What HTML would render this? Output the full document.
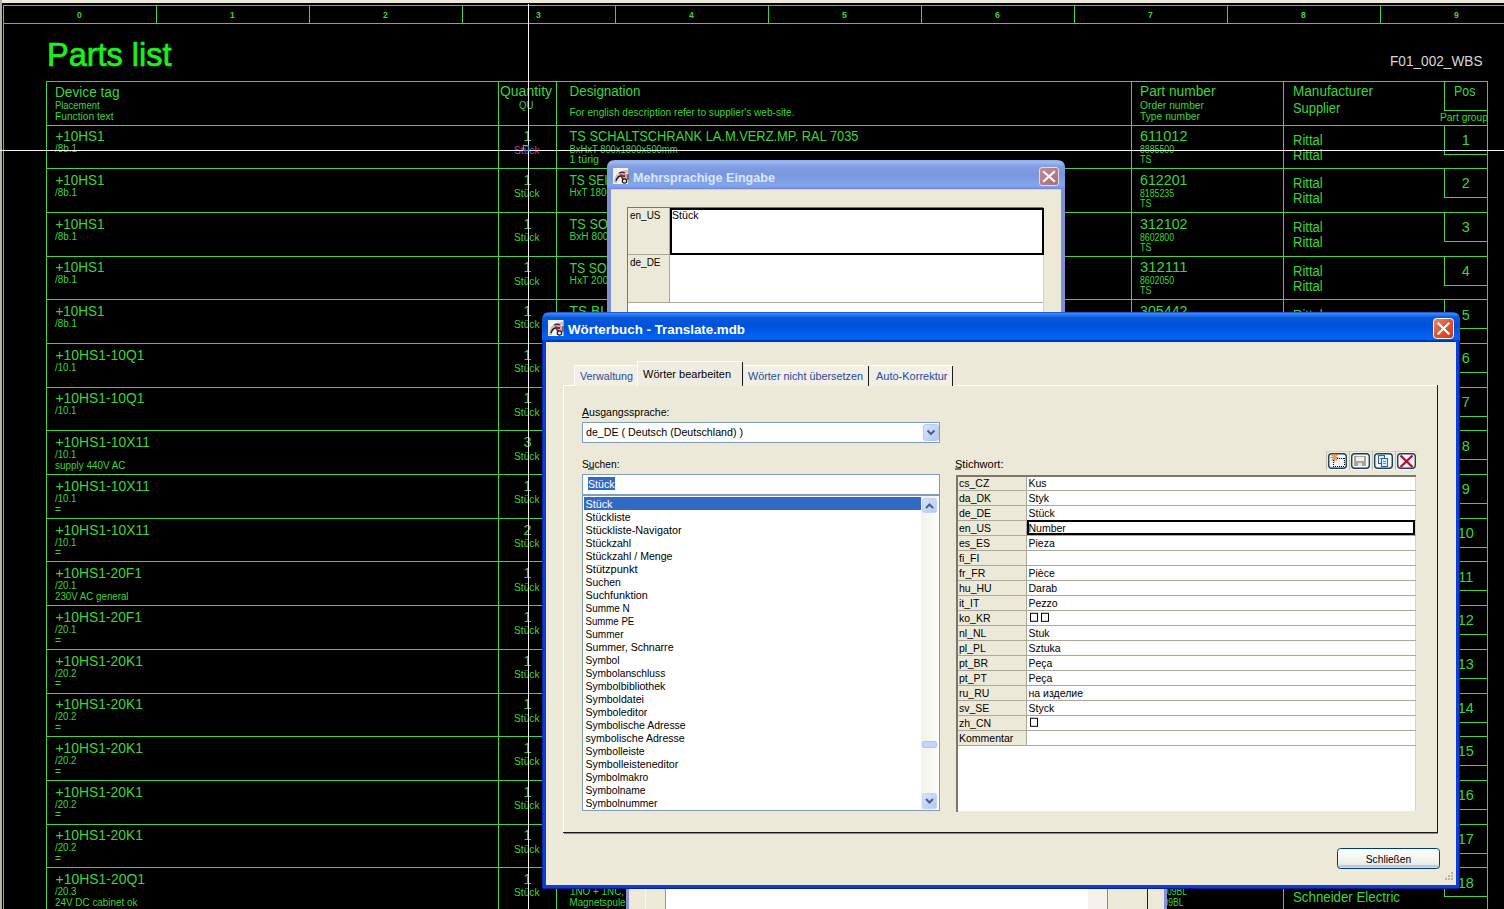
<!DOCTYPE html><html><head><meta charset="utf-8"><style>html,body{margin:0;padding:0;background:#000;overflow:hidden}svg{display:block}text{font-family:"Liberation Sans",sans-serif}</style></head><body>
<svg width="1504" height="909" viewBox="0 0 1504 909">
<defs><linearGradient id="tbA" gradientUnits="userSpaceOnUse" x1="0" y1="312" x2="0" y2="342"><stop offset="0" stop-color="#0b3ab0"/><stop offset="0.04" stop-color="#3d8bff"/><stop offset="0.1" stop-color="#2a78f4"/><stop offset="0.18" stop-color="#0a5ad8"/><stop offset="0.45" stop-color="#0050dc"/><stop offset="0.7" stop-color="#005ce8"/><stop offset="0.85" stop-color="#0064f4"/><stop offset="0.93" stop-color="#0058e8"/><stop offset="0.96" stop-color="#0030a0"/><stop offset="1" stop-color="#0030a0"/></linearGradient><linearGradient id="tbI" gradientUnits="userSpaceOnUse" x1="0" y1="160" x2="0" y2="190"><stop offset="0" stop-color="#8eaaea"/><stop offset="0.07" stop-color="#9cbaf2"/><stop offset="0.2" stop-color="#829fe4"/><stop offset="0.5" stop-color="#7896de"/><stop offset="0.8" stop-color="#80a6ec"/><stop offset="0.9" stop-color="#7e9ee6"/><stop offset="0.95" stop-color="#7b88d8"/><stop offset="1" stop-color="#7a84d4"/></linearGradient><linearGradient id="btn" x1="0" y1="0" x2="0" y2="1"><stop offset="0" stop-color="#ffffff"/><stop offset="0.7" stop-color="#f0f0ea"/><stop offset="1" stop-color="#d8d6cc"/></linearGradient><linearGradient id="scb" x1="0" y1="0" x2="1" y2="1"><stop offset="0" stop-color="#d8e4fc"/><stop offset="1" stop-color="#b4c8f6"/></linearGradient><linearGradient id="trk" x1="0" y1="0" x2="1" y2="0"><stop offset="0" stop-color="#f2f1ea"/><stop offset="1" stop-color="#fdfdfa"/></linearGradient><linearGradient id="clsA" x1="0" y1="0" x2="1" y2="1"><stop offset="0" stop-color="#f08a6c"/><stop offset="0.5" stop-color="#e0532e"/><stop offset="1" stop-color="#c83c1c"/></linearGradient><linearGradient id="clsI" x1="0" y1="0" x2="1" y2="1"><stop offset="0" stop-color="#c48c98"/><stop offset="1" stop-color="#a86c7c"/></linearGradient></defs>
<g class="cad">
<rect x="0" y="0" width="1504" height="909" fill="#000" />
<rect x="0" y="0" width="1504" height="3" fill="#ece9d8" />
<rect x="0" y="0" width="2" height="909" fill="#b4b2a6" />
<g shape-rendering="crispEdges">
<rect x="3" y="5" width="1501" height="1" fill="#48d048" />
<rect x="3" y="23" width="1501" height="1" fill="#48d048" />
<rect x="3" y="5" width="1" height="904" fill="#48d048" />
<rect x="156" y="5" width="1" height="18" fill="#48d048" />
<rect x="309" y="5" width="1" height="18" fill="#48d048" />
<rect x="462" y="5" width="1" height="18" fill="#48d048" />
<rect x="615" y="5" width="1" height="18" fill="#48d048" />
<rect x="768" y="5" width="1" height="18" fill="#48d048" />
<rect x="921" y="5" width="1" height="18" fill="#48d048" />
<rect x="1074" y="5" width="1" height="18" fill="#48d048" />
<rect x="1227" y="5" width="1" height="18" fill="#48d048" />
<rect x="1380" y="5" width="1" height="18" fill="#48d048" />
</g>
<text x="79.5" y="17.5" font-size="8.6" fill="#3cd63c" font-weight="bold" text-anchor="middle" >0</text>
<text x="232.5" y="17.5" font-size="8.6" fill="#3cd63c" font-weight="bold" text-anchor="middle" >1</text>
<text x="385.5" y="17.5" font-size="8.6" fill="#3cd63c" font-weight="bold" text-anchor="middle" >2</text>
<text x="538.5" y="17.5" font-size="8.6" fill="#3cd63c" font-weight="bold" text-anchor="middle" >3</text>
<text x="691.5" y="17.5" font-size="8.6" fill="#3cd63c" font-weight="bold" text-anchor="middle" >4</text>
<text x="844.5" y="17.5" font-size="8.6" fill="#3cd63c" font-weight="bold" text-anchor="middle" >5</text>
<text x="997.5" y="17.5" font-size="8.6" fill="#3cd63c" font-weight="bold" text-anchor="middle" >6</text>
<text x="1150.5" y="17.5" font-size="8.6" fill="#3cd63c" font-weight="bold" text-anchor="middle" >7</text>
<text x="1303.5" y="17.5" font-size="8.6" fill="#3cd63c" font-weight="bold" text-anchor="middle" >8</text>
<text x="1456.5" y="17.5" font-size="8.6" fill="#3cd63c" font-weight="bold" text-anchor="middle" >9</text>
<text x="47" y="65.5" font-size="34.06" fill="#1ef01e" textLength="124.5" lengthAdjust="spacingAndGlyphs" stroke="#1ef01e" stroke-width="0.7">Parts list</text>
<text x="1390" y="65.8" font-size="14.49" fill="#d8d8d8" textLength="92.5" lengthAdjust="spacingAndGlyphs" >F01_002_WBS</text>
<g shape-rendering="crispEdges">
<rect x="46" y="81" width="1442" height="1" fill="#48d048" />
<rect x="46" y="125" width="1442" height="1" fill="#48d048" />
<rect x="46" y="168" width="1442" height="1" fill="#48d048" />
<rect x="46" y="212" width="1442" height="1" fill="#48d048" />
<rect x="46" y="256" width="1442" height="1" fill="#48d048" />
<rect x="46" y="299" width="1442" height="1" fill="#48d048" />
<rect x="46" y="343" width="1442" height="1" fill="#48d048" />
<rect x="46" y="387" width="1442" height="1" fill="#48d048" />
<rect x="46" y="430" width="1442" height="1" fill="#48d048" />
<rect x="46" y="474" width="1442" height="1" fill="#48d048" />
<rect x="46" y="518" width="1442" height="1" fill="#48d048" />
<rect x="46" y="561" width="1442" height="1" fill="#48d048" />
<rect x="46" y="605" width="1442" height="1" fill="#48d048" />
<rect x="46" y="649" width="1442" height="1" fill="#48d048" />
<rect x="46" y="693" width="1442" height="1" fill="#48d048" />
<rect x="46" y="736" width="1442" height="1" fill="#48d048" />
<rect x="46" y="780" width="1442" height="1" fill="#48d048" />
<rect x="46" y="824" width="1442" height="1" fill="#48d048" />
<rect x="46" y="867" width="1442" height="1" fill="#48d048" />
<rect x="46" y="81" width="1" height="828" fill="#48d048" />
<rect x="498" y="81" width="1" height="828" fill="#48d048" />
<rect x="556" y="81" width="1" height="828" fill="#48d048" />
<rect x="1131" y="81" width="1" height="828" fill="#48d048" />
<rect x="1283" y="81" width="1" height="828" fill="#48d048" />
<rect x="1487" y="81" width="1" height="828" fill="#48d048" />
<rect x="1444" y="81" width="1" height="29" fill="#48d048" />
<rect x="1444" y="110" width="43" height="1" fill="#48d048" />
<rect x="1444" y="125" width="1" height="29" fill="#48d048" />
<rect x="1444" y="154" width="43" height="1" fill="#48d048" />
<rect x="1444" y="168" width="1" height="29" fill="#48d048" />
<rect x="1444" y="197" width="43" height="1" fill="#48d048" />
<rect x="1444" y="212" width="1" height="29" fill="#48d048" />
<rect x="1444" y="241" width="43" height="1" fill="#48d048" />
<rect x="1444" y="256" width="1" height="29" fill="#48d048" />
<rect x="1444" y="285" width="43" height="1" fill="#48d048" />
<rect x="1444" y="299" width="1" height="29" fill="#48d048" />
<rect x="1444" y="328" width="43" height="1" fill="#48d048" />
<rect x="1444" y="343" width="1" height="29" fill="#48d048" />
<rect x="1444" y="372" width="43" height="1" fill="#48d048" />
<rect x="1444" y="387" width="1" height="29" fill="#48d048" />
<rect x="1444" y="416" width="43" height="1" fill="#48d048" />
<rect x="1444" y="430" width="1" height="29" fill="#48d048" />
<rect x="1444" y="459" width="43" height="1" fill="#48d048" />
<rect x="1444" y="474" width="1" height="29" fill="#48d048" />
<rect x="1444" y="503" width="43" height="1" fill="#48d048" />
<rect x="1444" y="518" width="1" height="29" fill="#48d048" />
<rect x="1444" y="547" width="43" height="1" fill="#48d048" />
<rect x="1444" y="561" width="1" height="29" fill="#48d048" />
<rect x="1444" y="590" width="43" height="1" fill="#48d048" />
<rect x="1444" y="605" width="1" height="29" fill="#48d048" />
<rect x="1444" y="634" width="43" height="1" fill="#48d048" />
<rect x="1444" y="649" width="1" height="29" fill="#48d048" />
<rect x="1444" y="678" width="43" height="1" fill="#48d048" />
<rect x="1444" y="693" width="1" height="29" fill="#48d048" />
<rect x="1444" y="722" width="43" height="1" fill="#48d048" />
<rect x="1444" y="736" width="1" height="29" fill="#48d048" />
<rect x="1444" y="765" width="43" height="1" fill="#48d048" />
<rect x="1444" y="780" width="1" height="29" fill="#48d048" />
<rect x="1444" y="809" width="43" height="1" fill="#48d048" />
<rect x="1444" y="824" width="1" height="29" fill="#48d048" />
<rect x="1444" y="853" width="43" height="1" fill="#48d048" />
<rect x="1444" y="867" width="1" height="29" fill="#48d048" />
<rect x="1444" y="896" width="43" height="1" fill="#48d048" />
</g>
<text x="55" y="97" font-size="14.49" fill="#3cd63c" textLength="64.5" lengthAdjust="spacingAndGlyphs" >Device tag</text>
<text x="55" y="108.6" font-size="10.58" fill="#3cd63c" textLength="44.5" lengthAdjust="spacingAndGlyphs" >Placement</text>
<text x="55" y="119.7" font-size="10.58" fill="#3cd63c" textLength="58.5" lengthAdjust="spacingAndGlyphs" >Function text</text>
<text x="500" y="96" font-size="14.49" fill="#3cd63c" textLength="52" lengthAdjust="spacingAndGlyphs" >Quantity</text>
<text x="519" y="109.1" font-size="10.58" fill="#3cd63c" textLength="14.5" lengthAdjust="spacingAndGlyphs" >QU</text>
<text x="569.5" y="96" font-size="14.49" fill="#3cd63c" textLength="71" lengthAdjust="spacingAndGlyphs" >Designation</text>
<text x="569.5" y="115.8" font-size="10.58" fill="#3cd63c" textLength="225" lengthAdjust="spacingAndGlyphs" >For english description refer to supplier&#x27;s web-site.</text>
<text x="1140" y="96" font-size="14.49" fill="#3cd63c" textLength="75.5" lengthAdjust="spacingAndGlyphs" >Part number</text>
<text x="1140" y="108.8" font-size="10.58" fill="#3cd63c" textLength="64" lengthAdjust="spacingAndGlyphs" >Order number</text>
<text x="1140" y="119.8" font-size="10.58" fill="#3cd63c" textLength="60" lengthAdjust="spacingAndGlyphs" >Type number</text>
<text x="1293" y="96" font-size="14.49" fill="#3cd63c" textLength="80" lengthAdjust="spacingAndGlyphs" >Manufacturer</text>
<text x="1293" y="113" font-size="14.49" fill="#3cd63c" textLength="47.3" lengthAdjust="spacingAndGlyphs" >Supplier</text>
<text x="1454" y="95.8" font-size="14.49" fill="#3cd63c" textLength="21.4" lengthAdjust="spacingAndGlyphs" >Pos</text>
<text x="1440" y="120.7" font-size="10.58" fill="#3cd63c" textLength="48" lengthAdjust="spacingAndGlyphs" >Part group</text>
<text x="55.5" y="141.29" font-size="14.49" fill="#3cd63c" textLength="49" lengthAdjust="spacingAndGlyphs" >+10HS1</text>
<text x="55" y="152.29" font-size="10.58" fill="#3cd63c" textLength="22" lengthAdjust="spacingAndGlyphs" >/8b.1</text>
<text x="527.5" y="141.29" font-size="14.49" fill="#3cd63c" text-anchor="middle" >1</text>
<text x="514" y="153.69" font-size="10.58" fill="#c43ca0" textLength="25.5" lengthAdjust="spacingAndGlyphs" >Stück</text>
<text x="1465.7" y="144.79" font-size="14.49" fill="#3cd63c" text-anchor="middle" >1</text>
<text x="55.5" y="184.98" font-size="14.49" fill="#3cd63c" textLength="49" lengthAdjust="spacingAndGlyphs" >+10HS1</text>
<text x="55" y="195.98" font-size="10.58" fill="#3cd63c" textLength="22" lengthAdjust="spacingAndGlyphs" >/8b.1</text>
<text x="527.5" y="184.98" font-size="14.49" fill="#3cd63c" text-anchor="middle" >1</text>
<text x="514" y="197.38" font-size="10.58" fill="#3cd63c" textLength="25.5" lengthAdjust="spacingAndGlyphs" >Stück</text>
<text x="1465.7" y="188.48" font-size="14.49" fill="#3cd63c" text-anchor="middle" >2</text>
<text x="55.5" y="228.67" font-size="14.49" fill="#3cd63c" textLength="49" lengthAdjust="spacingAndGlyphs" >+10HS1</text>
<text x="55" y="239.67" font-size="10.58" fill="#3cd63c" textLength="22" lengthAdjust="spacingAndGlyphs" >/8b.1</text>
<text x="527.5" y="228.67" font-size="14.49" fill="#3cd63c" text-anchor="middle" >1</text>
<text x="514" y="241.07" font-size="10.58" fill="#3cd63c" textLength="25.5" lengthAdjust="spacingAndGlyphs" >Stück</text>
<text x="1465.7" y="232.17" font-size="14.49" fill="#3cd63c" text-anchor="middle" >3</text>
<text x="55.5" y="272.35999999999996" font-size="14.49" fill="#3cd63c" textLength="49" lengthAdjust="spacingAndGlyphs" >+10HS1</text>
<text x="55" y="283.35999999999996" font-size="10.58" fill="#3cd63c" textLength="22" lengthAdjust="spacingAndGlyphs" >/8b.1</text>
<text x="527.5" y="272.35999999999996" font-size="14.49" fill="#3cd63c" text-anchor="middle" >1</text>
<text x="514" y="284.76" font-size="10.58" fill="#3cd63c" textLength="25.5" lengthAdjust="spacingAndGlyphs" >Stück</text>
<text x="1465.7" y="275.85999999999996" font-size="14.49" fill="#3cd63c" text-anchor="middle" >4</text>
<text x="55.5" y="316.04999999999995" font-size="14.49" fill="#3cd63c" textLength="49" lengthAdjust="spacingAndGlyphs" >+10HS1</text>
<text x="55" y="327.04999999999995" font-size="10.58" fill="#3cd63c" textLength="22" lengthAdjust="spacingAndGlyphs" >/8b.1</text>
<text x="527.5" y="316.04999999999995" font-size="14.49" fill="#3cd63c" text-anchor="middle" >1</text>
<text x="514" y="328.45" font-size="10.58" fill="#3cd63c" textLength="25.5" lengthAdjust="spacingAndGlyphs" >Stück</text>
<text x="1465.7" y="319.54999999999995" font-size="14.49" fill="#3cd63c" text-anchor="middle" >5</text>
<text x="55.5" y="359.73999999999995" font-size="14.49" fill="#3cd63c" textLength="89" lengthAdjust="spacingAndGlyphs" >+10HS1-10Q1</text>
<text x="55" y="370.73999999999995" font-size="10.58" fill="#3cd63c" textLength="21.5" lengthAdjust="spacingAndGlyphs" >/10.1</text>
<text x="527.5" y="359.73999999999995" font-size="14.49" fill="#3cd63c" text-anchor="middle" >1</text>
<text x="514" y="372.14" font-size="10.58" fill="#3cd63c" textLength="25.5" lengthAdjust="spacingAndGlyphs" >Stück</text>
<text x="1465.7" y="363.23999999999995" font-size="14.49" fill="#3cd63c" text-anchor="middle" >6</text>
<text x="55.5" y="403.42999999999995" font-size="14.49" fill="#3cd63c" textLength="89" lengthAdjust="spacingAndGlyphs" >+10HS1-10Q1</text>
<text x="55" y="414.42999999999995" font-size="10.58" fill="#3cd63c" textLength="21.5" lengthAdjust="spacingAndGlyphs" >/10.1</text>
<text x="527.5" y="403.42999999999995" font-size="14.49" fill="#3cd63c" text-anchor="middle" >1</text>
<text x="514" y="415.83" font-size="10.58" fill="#3cd63c" textLength="25.5" lengthAdjust="spacingAndGlyphs" >Stück</text>
<text x="1465.7" y="406.92999999999995" font-size="14.49" fill="#3cd63c" text-anchor="middle" >7</text>
<text x="55.5" y="447.11999999999995" font-size="14.49" fill="#3cd63c" textLength="94.5" lengthAdjust="spacingAndGlyphs" >+10HS1-10X11</text>
<text x="55" y="458.11999999999995" font-size="10.58" fill="#3cd63c" textLength="21.5" lengthAdjust="spacingAndGlyphs" >/10.1</text>
<text x="55" y="468.91999999999996" font-size="10.58" fill="#3cd63c" textLength="70.5" lengthAdjust="spacingAndGlyphs" >supply 440V AC</text>
<text x="527.5" y="447.11999999999995" font-size="14.49" fill="#3cd63c" text-anchor="middle" >3</text>
<text x="514" y="459.52" font-size="10.58" fill="#3cd63c" textLength="25.5" lengthAdjust="spacingAndGlyphs" >Stück</text>
<text x="1465.7" y="450.61999999999995" font-size="14.49" fill="#3cd63c" text-anchor="middle" >8</text>
<text x="55.5" y="490.80999999999995" font-size="14.49" fill="#3cd63c" textLength="94.5" lengthAdjust="spacingAndGlyphs" >+10HS1-10X11</text>
<text x="55" y="501.80999999999995" font-size="10.58" fill="#3cd63c" textLength="21.5" lengthAdjust="spacingAndGlyphs" >/10.1</text>
<text x="55" y="512.61" font-size="10.58" fill="#3cd63c" textLength="6" lengthAdjust="spacingAndGlyphs" >=</text>
<text x="527.5" y="490.80999999999995" font-size="14.49" fill="#3cd63c" text-anchor="middle" >1</text>
<text x="514" y="503.21" font-size="10.58" fill="#3cd63c" textLength="25.5" lengthAdjust="spacingAndGlyphs" >Stück</text>
<text x="1465.7" y="494.30999999999995" font-size="14.49" fill="#3cd63c" text-anchor="middle" >9</text>
<text x="55.5" y="534.5" font-size="14.49" fill="#3cd63c" textLength="94.5" lengthAdjust="spacingAndGlyphs" >+10HS1-10X11</text>
<text x="55" y="545.5" font-size="10.58" fill="#3cd63c" textLength="21.5" lengthAdjust="spacingAndGlyphs" >/10.1</text>
<text x="55" y="556.3000000000001" font-size="10.58" fill="#3cd63c" textLength="6" lengthAdjust="spacingAndGlyphs" >=</text>
<text x="527.5" y="534.5" font-size="14.49" fill="#3cd63c" text-anchor="middle" >2</text>
<text x="514" y="546.9" font-size="10.58" fill="#3cd63c" textLength="25.5" lengthAdjust="spacingAndGlyphs" >Stück</text>
<text x="1465.7" y="538.0" font-size="14.49" fill="#3cd63c" text-anchor="middle" >10</text>
<text x="55.5" y="578.1899999999999" font-size="14.49" fill="#3cd63c" textLength="86.5" lengthAdjust="spacingAndGlyphs" >+10HS1-20F1</text>
<text x="55" y="589.1899999999999" font-size="10.58" fill="#3cd63c" textLength="21.5" lengthAdjust="spacingAndGlyphs" >/20.1</text>
<text x="55" y="599.99" font-size="10.58" fill="#3cd63c" textLength="73.5" lengthAdjust="spacingAndGlyphs" >230V AC general</text>
<text x="527.5" y="578.1899999999999" font-size="14.49" fill="#3cd63c" text-anchor="middle" >1</text>
<text x="514" y="590.5899999999999" font-size="10.58" fill="#3cd63c" textLength="25.5" lengthAdjust="spacingAndGlyphs" >Stück</text>
<text x="1465.7" y="581.6899999999999" font-size="14.49" fill="#3cd63c" text-anchor="middle" >11</text>
<text x="55.5" y="621.88" font-size="14.49" fill="#3cd63c" textLength="86.5" lengthAdjust="spacingAndGlyphs" >+10HS1-20F1</text>
<text x="55" y="632.88" font-size="10.58" fill="#3cd63c" textLength="21.5" lengthAdjust="spacingAndGlyphs" >/20.1</text>
<text x="55" y="643.6800000000001" font-size="10.58" fill="#3cd63c" textLength="6" lengthAdjust="spacingAndGlyphs" >=</text>
<text x="527.5" y="621.88" font-size="14.49" fill="#3cd63c" text-anchor="middle" >1</text>
<text x="514" y="634.28" font-size="10.58" fill="#3cd63c" textLength="25.5" lengthAdjust="spacingAndGlyphs" >Stück</text>
<text x="1465.7" y="625.38" font-size="14.49" fill="#3cd63c" text-anchor="middle" >12</text>
<text x="55.5" y="665.57" font-size="14.49" fill="#3cd63c" textLength="87.5" lengthAdjust="spacingAndGlyphs" >+10HS1-20K1</text>
<text x="55" y="676.57" font-size="10.58" fill="#3cd63c" textLength="21.5" lengthAdjust="spacingAndGlyphs" >/20.2</text>
<text x="55" y="687.3700000000001" font-size="10.58" fill="#3cd63c" textLength="6" lengthAdjust="spacingAndGlyphs" >=</text>
<text x="527.5" y="665.57" font-size="14.49" fill="#3cd63c" text-anchor="middle" >1</text>
<text x="514" y="677.97" font-size="10.58" fill="#3cd63c" textLength="25.5" lengthAdjust="spacingAndGlyphs" >Stück</text>
<text x="1465.7" y="669.07" font-size="14.49" fill="#3cd63c" text-anchor="middle" >13</text>
<text x="55.5" y="709.26" font-size="14.49" fill="#3cd63c" textLength="87.5" lengthAdjust="spacingAndGlyphs" >+10HS1-20K1</text>
<text x="55" y="720.26" font-size="10.58" fill="#3cd63c" textLength="21.5" lengthAdjust="spacingAndGlyphs" >/20.2</text>
<text x="55" y="731.0600000000001" font-size="10.58" fill="#3cd63c" textLength="6" lengthAdjust="spacingAndGlyphs" >=</text>
<text x="527.5" y="709.26" font-size="14.49" fill="#3cd63c" text-anchor="middle" >1</text>
<text x="514" y="721.66" font-size="10.58" fill="#3cd63c" textLength="25.5" lengthAdjust="spacingAndGlyphs" >Stück</text>
<text x="1465.7" y="712.76" font-size="14.49" fill="#3cd63c" text-anchor="middle" >14</text>
<text x="55.5" y="752.9499999999999" font-size="14.49" fill="#3cd63c" textLength="87.5" lengthAdjust="spacingAndGlyphs" >+10HS1-20K1</text>
<text x="55" y="763.9499999999999" font-size="10.58" fill="#3cd63c" textLength="21.5" lengthAdjust="spacingAndGlyphs" >/20.2</text>
<text x="55" y="774.75" font-size="10.58" fill="#3cd63c" textLength="6" lengthAdjust="spacingAndGlyphs" >=</text>
<text x="527.5" y="752.9499999999999" font-size="14.49" fill="#3cd63c" text-anchor="middle" >1</text>
<text x="514" y="765.3499999999999" font-size="10.58" fill="#3cd63c" textLength="25.5" lengthAdjust="spacingAndGlyphs" >Stück</text>
<text x="1465.7" y="756.4499999999999" font-size="14.49" fill="#3cd63c" text-anchor="middle" >15</text>
<text x="55.5" y="796.64" font-size="14.49" fill="#3cd63c" textLength="87.5" lengthAdjust="spacingAndGlyphs" >+10HS1-20K1</text>
<text x="55" y="807.64" font-size="10.58" fill="#3cd63c" textLength="21.5" lengthAdjust="spacingAndGlyphs" >/20.2</text>
<text x="55" y="818.44" font-size="10.58" fill="#3cd63c" textLength="6" lengthAdjust="spacingAndGlyphs" >=</text>
<text x="527.5" y="796.64" font-size="14.49" fill="#3cd63c" text-anchor="middle" >1</text>
<text x="514" y="809.04" font-size="10.58" fill="#3cd63c" textLength="25.5" lengthAdjust="spacingAndGlyphs" >Stück</text>
<text x="1465.7" y="800.14" font-size="14.49" fill="#3cd63c" text-anchor="middle" >16</text>
<text x="55.5" y="840.33" font-size="14.49" fill="#3cd63c" textLength="87.5" lengthAdjust="spacingAndGlyphs" >+10HS1-20K1</text>
<text x="55" y="851.33" font-size="10.58" fill="#3cd63c" textLength="21.5" lengthAdjust="spacingAndGlyphs" >/20.2</text>
<text x="55" y="862.1300000000001" font-size="10.58" fill="#3cd63c" textLength="6" lengthAdjust="spacingAndGlyphs" >=</text>
<text x="527.5" y="840.33" font-size="14.49" fill="#3cd63c" text-anchor="middle" >1</text>
<text x="514" y="852.73" font-size="10.58" fill="#3cd63c" textLength="25.5" lengthAdjust="spacingAndGlyphs" >Stück</text>
<text x="1465.7" y="843.83" font-size="14.49" fill="#3cd63c" text-anchor="middle" >17</text>
<text x="55.5" y="884.02" font-size="14.49" fill="#3cd63c" textLength="89.5" lengthAdjust="spacingAndGlyphs" >+10HS1-20Q1</text>
<text x="55" y="895.02" font-size="10.58" fill="#3cd63c" textLength="21.5" lengthAdjust="spacingAndGlyphs" >/20.3</text>
<text x="55" y="905.82" font-size="10.58" fill="#3cd63c" textLength="82.5" lengthAdjust="spacingAndGlyphs" >24V DC cabinet ok</text>
<text x="527.5" y="884.02" font-size="14.49" fill="#3cd63c" text-anchor="middle" >1</text>
<text x="514" y="896.42" font-size="10.58" fill="#3cd63c" textLength="25.5" lengthAdjust="spacingAndGlyphs" >Stück</text>
<text x="1465.7" y="887.52" font-size="14.49" fill="#3cd63c" text-anchor="middle" >18</text>
<text x="569.5" y="141.49" font-size="14.49" fill="#3cd63c" textLength="289" lengthAdjust="spacingAndGlyphs" >TS SCHALTSCHRANK LA.M.VERZ.MP. RAL 7035</text>
<text x="569.5" y="152.69" font-size="10.58" fill="#3cd63c" textLength="108" lengthAdjust="spacingAndGlyphs" >BxHxT 800x1800x500mm</text>
<text x="569.5" y="163.49" font-size="10.58" fill="#3cd63c" textLength="29.5" lengthAdjust="spacingAndGlyphs" >1 türig</text>
<text x="569.5" y="185.17999999999998" font-size="14.49" fill="#3cd63c" textLength="180" lengthAdjust="spacingAndGlyphs" >TS SEITENWAND STAHLBLECH</text>
<text x="569.5" y="196.38" font-size="10.58" fill="#3cd63c" textLength="80" lengthAdjust="spacingAndGlyphs" >HxT 1800x500mm</text>
<text x="569.5" y="228.86999999999998" font-size="14.49" fill="#3cd63c" textLength="170" lengthAdjust="spacingAndGlyphs" >TS SOCKEL FRONT/HINTEN</text>
<text x="569.5" y="240.07" font-size="10.58" fill="#3cd63c" textLength="78" lengthAdjust="spacingAndGlyphs" >BxH 800x100mm</text>
<text x="569.5" y="272.56" font-size="14.49" fill="#3cd63c" textLength="175" lengthAdjust="spacingAndGlyphs" >TS SOCKEL SEITENBLENDEN</text>
<text x="569.5" y="283.76" font-size="10.58" fill="#3cd63c" textLength="78" lengthAdjust="spacingAndGlyphs" >HxT 200x500mm</text>
<text x="569.5" y="316.25" font-size="14.49" fill="#3cd63c" textLength="150" lengthAdjust="spacingAndGlyphs" >TS BLINDABDECKUNG</text>
<text x="570" y="894.62" font-size="10.58" fill="#3cd63c" textLength="54" lengthAdjust="spacingAndGlyphs" >1NO + 1NC,</text>
<text x="569.5" y="905.62" font-size="10.58" fill="#3cd63c" textLength="56" lengthAdjust="spacingAndGlyphs" >Magnetspule</text>
<text x="1140" y="141.39" font-size="14.49" fill="#3cd63c" textLength="47.5" lengthAdjust="spacingAndGlyphs" >611012</text>
<text x="1140" y="153.39" font-size="10.58" fill="#3cd63c" textLength="34" lengthAdjust="spacingAndGlyphs" >8885500</text>
<text x="1140" y="163.39" font-size="10.58" fill="#3cd63c" textLength="11.5" lengthAdjust="spacingAndGlyphs" >TS</text>
<text x="1293" y="144.79" font-size="14.49" fill="#3cd63c" textLength="29.7" lengthAdjust="spacingAndGlyphs" >Rittal</text>
<text x="1293" y="159.59" font-size="14.49" fill="#3cd63c" textLength="29.7" lengthAdjust="spacingAndGlyphs" >Rittal</text>
<text x="1140" y="185.07999999999998" font-size="14.49" fill="#3cd63c" textLength="47.5" lengthAdjust="spacingAndGlyphs" >612201</text>
<text x="1140" y="197.07999999999998" font-size="10.58" fill="#3cd63c" textLength="34" lengthAdjust="spacingAndGlyphs" >8185235</text>
<text x="1140" y="207.07999999999998" font-size="10.58" fill="#3cd63c" textLength="11.5" lengthAdjust="spacingAndGlyphs" >TS</text>
<text x="1293" y="188.48" font-size="14.49" fill="#3cd63c" textLength="29.7" lengthAdjust="spacingAndGlyphs" >Rittal</text>
<text x="1293" y="203.27999999999997" font-size="14.49" fill="#3cd63c" textLength="29.7" lengthAdjust="spacingAndGlyphs" >Rittal</text>
<text x="1140" y="228.76999999999998" font-size="14.49" fill="#3cd63c" textLength="47.5" lengthAdjust="spacingAndGlyphs" >312102</text>
<text x="1140" y="240.76999999999998" font-size="10.58" fill="#3cd63c" textLength="34" lengthAdjust="spacingAndGlyphs" >8602800</text>
<text x="1140" y="250.76999999999998" font-size="10.58" fill="#3cd63c" textLength="11.5" lengthAdjust="spacingAndGlyphs" >TS</text>
<text x="1293" y="232.17" font-size="14.49" fill="#3cd63c" textLength="29.7" lengthAdjust="spacingAndGlyphs" >Rittal</text>
<text x="1293" y="246.96999999999997" font-size="14.49" fill="#3cd63c" textLength="29.7" lengthAdjust="spacingAndGlyphs" >Rittal</text>
<text x="1140" y="272.46" font-size="14.49" fill="#3cd63c" textLength="47.5" lengthAdjust="spacingAndGlyphs" >312111</text>
<text x="1140" y="284.46" font-size="10.58" fill="#3cd63c" textLength="34" lengthAdjust="spacingAndGlyphs" >8602050</text>
<text x="1140" y="294.46" font-size="10.58" fill="#3cd63c" textLength="11.5" lengthAdjust="spacingAndGlyphs" >TS</text>
<text x="1293" y="275.85999999999996" font-size="14.49" fill="#3cd63c" textLength="29.7" lengthAdjust="spacingAndGlyphs" >Rittal</text>
<text x="1293" y="290.65999999999997" font-size="14.49" fill="#3cd63c" textLength="29.7" lengthAdjust="spacingAndGlyphs" >Rittal</text>
<text x="1140" y="316.15" font-size="14.49" fill="#3cd63c" textLength="47.5" lengthAdjust="spacingAndGlyphs" >305442</text>
<text x="1140" y="328.15" font-size="10.58" fill="#3cd63c" textLength="34" lengthAdjust="spacingAndGlyphs" >8612000</text>
<text x="1140" y="338.15" font-size="10.58" fill="#3cd63c" textLength="11.5" lengthAdjust="spacingAndGlyphs" >TS</text>
<text x="1293" y="319.54999999999995" font-size="14.49" fill="#3cd63c" textLength="29.7" lengthAdjust="spacingAndGlyphs" >Rittal</text>
<text x="1293" y="334.34999999999997" font-size="14.49" fill="#3cd63c" textLength="29.7" lengthAdjust="spacingAndGlyphs" >Rittal</text>
<text x="1145" y="894.62" font-size="10.58" fill="#3cd63c" textLength="42" lengthAdjust="spacingAndGlyphs" >LC1D09BL</text>
<text x="1141.5" y="905.62" font-size="10.58" fill="#3cd63c" textLength="42" lengthAdjust="spacingAndGlyphs" >LC1D09BL</text>
<text x="1293" y="901.92" font-size="14.49" fill="#3cd63c" textLength="107" lengthAdjust="spacingAndGlyphs" >Schneider Electric</text>
<g shape-rendering="crispEdges">
<rect x="528" y="4" width="1" height="905" fill="#f4f4f4" />
<rect x="0" y="150" width="1504" height="1" fill="#f4f4f4" />
<rect x="523.5" y="145.5" width="5" height="5" fill="none" stroke="#40b8d8" stroke-width="1"/>
</g>
</g>
<path d="M607 168 Q607 160 615 160 L1057 160 Q1065 160 1065 168 L1065 330 L607 330 Z" fill="url(#tbI)"/>
<g shape-rendering="crispEdges">
<rect x="607" y="189" width="4" height="140" fill="#7f8fd8" />
<rect x="1061" y="189" width="4" height="140" fill="#7f8fd8" />
<rect x="611" y="190" width="450" height="140" fill="#ece9d8" />
<rect x="611" y="189" width="450" height="1" fill="#c8d0ee" />
</g>
<g transform="translate(613,168)">
<rect x="0" y="0" width="16" height="16" fill="#f4f2f0"/>
<path d="M1 15 C1 7 6 2 15 2 L15 5 C9 5 4 9 4 15 Z" fill="#c8c4bc"/>
<path d="M7 8 C9 5 13 5 15 7 L15 11 C12 13 9 12 8 10 Z" fill="#e89aa8"/>
<path d="M6 5 C8 4 10 4 12 5" fill="none" stroke="#3a2a3a" stroke-width="1.3"/>
<path d="M3 13 C4 10 6 8 8 8 L12 8" fill="none" stroke="#2a1a22" stroke-width="1.4"/>
<path d="M8 6 C8 9 9 11 12 12" fill="none" stroke="#8a2030" stroke-width="1.3"/>
<path d="M15 6 L15 12" stroke="#3a2a3a" stroke-width="1.2"/>
<circle cx="11.5" cy="13" r="2.2" fill="#dce8dc" stroke="#1a1a1a" stroke-width="1.2"/>
<rect x="15" y="0" width="1" height="16" fill="#5a6a8a" opacity="0.6"/>
</g>
<text x="633" y="182.2" font-size="13" fill="#dce6fa" font-weight="bold" textLength="142" lengthAdjust="spacingAndGlyphs" >Mehrsprachige Eingabe</text>
<rect x="1039.5" y="167.5" width="19" height="18" rx="2.5" fill="url(#clsI)" stroke="#e4dcec" stroke-width="1"/>
<path d="M1044 172 L1054 181 M1054 172 L1044 181" stroke="#fff" stroke-width="2.2" stroke-linecap="square"/>
<g shape-rendering="crispEdges">
<rect x="627" y="207" width="417" height="110" fill="#ffffff" />
<rect x="627" y="207" width="43" height="96" fill="#ece9d8" />
<rect x="627" y="207" width="417" height="1" fill="#7a7868" />
<rect x="627" y="207" width="1" height="110" fill="#7a7868" />
<rect x="1043" y="207" width="1" height="110" fill="#d4d0c8" />
<rect x="669" y="208" width="1" height="95" fill="#aca899" />
<rect x="628" y="254" width="415" height="1" fill="#aca899" />
<rect x="628" y="302" width="415" height="1" fill="#aca899" />
</g>
<rect x="671.0" y="209.0" width="372" height="45" fill="#fff" stroke="#000" stroke-width="2" rx="0" />
<text x="630" y="219.3" font-size="11" fill="#000" textLength="30.5" lengthAdjust="spacingAndGlyphs" >en_US</text>
<text x="672" y="219.3" font-size="11" fill="#000" textLength="26.5" lengthAdjust="spacingAndGlyphs" >Stück</text>
<text x="630" y="266.4" font-size="11" fill="#000" textLength="30.5" lengthAdjust="spacingAndGlyphs" >de_DE</text>
<g shape-rendering="crispEdges">
<rect x="626" y="880" width="541" height="29" fill="#ffffff" />
<rect x="626" y="880" width="3" height="29" fill="#8a90d8" />
<rect x="629" y="880" width="37" height="29" fill="#ece9d8" />
<rect x="645" y="880" width="1" height="29" fill="#f8f8f0" />
<rect x="665" y="880" width="1" height="29" fill="#9a9890" />
<rect x="1088" y="880" width="19" height="29" fill="#f3f2ec" />
<rect x="1107" y="880" width="1" height="29" fill="#8a8880" />
<rect x="1108" y="880" width="39" height="29" fill="#ece9d8" />
<rect x="1147" y="880" width="1" height="29" fill="#202020" />
<rect x="1148" y="880" width="16" height="29" fill="#ece9d8" />
<rect x="1164" y="880" width="3" height="29" fill="#8a90d8" />
</g>
<path d="M542 320 Q542 312 550 312 L1452 312 Q1460 312 1460 320 L1460 889 L542 889 Z" fill="url(#tbA)"/>
<g shape-rendering="crispEdges">
<rect x="542" y="341" width="4" height="548" fill="#0a3ed8" />
<rect x="1456" y="341" width="4" height="548" fill="#0a3ed8" />
<rect x="542" y="885" width="918" height="4" fill="#0a3ed8" />
<rect x="542" y="341" width="1" height="548" fill="#0028a8" />
<rect x="1459" y="341" width="1" height="548" fill="#001c90" />
<rect x="542" y="888" width="918" height="1" fill="#001c90" />
<rect x="546" y="342" width="910" height="543" fill="#ece9d8" />
<rect x="546" y="341" width="910" height="1" fill="#0030b0" />
</g>
<g transform="translate(548,320)">
<rect x="0" y="0" width="16" height="16" fill="#f4f2f0"/>
<path d="M1 15 C1 7 6 2 15 2 L15 5 C9 5 4 9 4 15 Z" fill="#c8c4bc"/>
<path d="M7 8 C9 5 13 5 15 7 L15 11 C12 13 9 12 8 10 Z" fill="#e89aa8"/>
<path d="M6 5 C8 4 10 4 12 5" fill="none" stroke="#3a2a3a" stroke-width="1.3"/>
<path d="M3 13 C4 10 6 8 8 8 L12 8" fill="none" stroke="#2a1a22" stroke-width="1.4"/>
<path d="M8 6 C8 9 9 11 12 12" fill="none" stroke="#8a2030" stroke-width="1.3"/>
<path d="M15 6 L15 12" stroke="#3a2a3a" stroke-width="1.2"/>
<circle cx="11.5" cy="13" r="2.2" fill="#dce8dc" stroke="#1a1a1a" stroke-width="1.2"/>
<rect x="15" y="0" width="1" height="16" fill="#5a6a8a" opacity="0.6"/>
</g>
<text x="568" y="333.7" font-size="13" fill="#ffffff" font-weight="bold" textLength="177" lengthAdjust="spacingAndGlyphs" >Wörterbuch - Translate.mdb</text>
<rect x="1433.5" y="318.5" width="20" height="20" rx="3" fill="url(#clsA)" stroke="#ffffff" stroke-width="1"/>
<path d="M1438.5 323.5 L1448.5 333.5 M1448.5 323.5 L1438.5 333.5" stroke="#fff" stroke-width="2.2" stroke-linecap="square"/>
<g shape-rendering="crispEdges">
<rect x="563" y="385" width="875" height="449" fill="#ece9d8" />
<rect x="563" y="385" width="875" height="1" fill="#ffffff" />
<rect x="563" y="385" width="1" height="449" fill="#ffffff" />
<rect x="1437" y="385" width="1" height="449" fill="#1a1a1a" />
<rect x="563" y="832" width="875" height="1" fill="#1a1a1a" />
<rect x="564" y="833" width="874" height="1" fill="#8a8880" />
</g>
<g shape-rendering="crispEdges">
<rect x="574" y="365" width="63" height="21" fill="#f1efe6" />
<rect x="574" y="365" width="63" height="1" fill="#ffffff" />
<rect x="574" y="365" width="1" height="21" fill="#ffffff" />
<rect x="744" y="365" width="125" height="21" fill="#f1efe6" />
<rect x="744" y="365" width="125" height="1" fill="#ffffff" />
<rect x="868" y="366" width="1" height="20" fill="#1a1a1a" />
<rect x="870" y="365" width="83" height="21" fill="#f1efe6" />
<rect x="870" y="365" width="83" height="1" fill="#ffffff" />
<rect x="952" y="366" width="1" height="20" fill="#1a1a1a" />
<rect x="637" y="361" width="106" height="25" fill="#eeece0" />
<rect x="637" y="361" width="106" height="1" fill="#ffffff" />
<rect x="637" y="361" width="1" height="25" fill="#ffffff" />
<rect x="742" y="362" width="1" height="24" fill="#1a1a1a" />
</g>
<text x="580" y="379.6" font-size="11" fill="#2a4a9a" textLength="53" lengthAdjust="spacingAndGlyphs" >Verwaltung</text>
<text x="643" y="377.6" font-size="11" fill="#000" textLength="88" lengthAdjust="spacingAndGlyphs" >Wörter bearbeiten</text>
<text x="748" y="379.6" font-size="11" fill="#2a4a9a" textLength="115" lengthAdjust="spacingAndGlyphs" >Wörter nicht übersetzen</text>
<text x="876" y="379.6" font-size="11" fill="#2a4a9a" textLength="71.5" lengthAdjust="spacingAndGlyphs" >Auto-Korrektur</text>
<text x="582" y="416.1" font-size="11" fill="#000" textLength="87.5" lengthAdjust="spacingAndGlyphs" >Ausgangssprache:</text>
<rect x="582" y="417" width="7" height="1" fill="#000"/>
<g shape-rendering="crispEdges">
<rect x="582" y="422" width="358" height="21" fill="#7f9db9" />
<rect x="583" y="423" width="356" height="19" fill="#ffffff" />
</g>
<text x="586" y="436.3" font-size="11" fill="#000" textLength="157" lengthAdjust="spacingAndGlyphs" >de_DE ( Deutsch (Deutschland) )</text>
<rect x="923.5" y="424.5" width="15" height="16" rx="2" fill="url(#scb)" stroke="#b8caf4" stroke-width="1"/>
<path d="M927.5 430.5 L931 434 L934.5 430.5" fill="none" stroke="#4d6185" stroke-width="2"/>
<text x="582" y="467.6" font-size="11" fill="#000" textLength="37.5" lengthAdjust="spacingAndGlyphs" >Suchen:</text>
<rect x="588" y="468.5" width="6" height="1" fill="#000"/>
<g shape-rendering="crispEdges">
<rect x="582" y="474" width="358" height="21" fill="#7f9db9" />
<rect x="583" y="475" width="356" height="19" fill="#ffffff" />
<rect x="588" y="477" width="27" height="13" fill="#316ac5" />
</g>
<text x="588" y="488" font-size="11" fill="#ffffff" textLength="26.5" lengthAdjust="spacingAndGlyphs" >Stück</text>
<g shape-rendering="crispEdges">
<rect x="582" y="495" width="358" height="316" fill="#7f9db9" />
<rect x="583" y="496" width="356" height="314" fill="#ffffff" />
<rect x="584" y="497" width="337" height="13" fill="#316ac5" />
<rect x="921" y="496" width="18" height="314" fill="url(#trk)" />
</g>
<text x="585.5" y="508" font-size="11" fill="#ffffff" textLength="27" lengthAdjust="spacingAndGlyphs" >Stück</text>
<text x="585.5" y="521" font-size="11" fill="#000" textLength="45" lengthAdjust="spacingAndGlyphs" >Stückliste</text>
<text x="585.5" y="534" font-size="11" fill="#000" textLength="96" lengthAdjust="spacingAndGlyphs" >Stückliste-Navigator</text>
<text x="585.5" y="547" font-size="11" fill="#000" textLength="45.5" lengthAdjust="spacingAndGlyphs" >Stückzahl</text>
<text x="585.5" y="560" font-size="11" fill="#000" textLength="87" lengthAdjust="spacingAndGlyphs" >Stückzahl / Menge</text>
<text x="585.5" y="573" font-size="11" fill="#000" textLength="52" lengthAdjust="spacingAndGlyphs" >Stützpunkt</text>
<text x="585.5" y="586" font-size="11" fill="#000" textLength="35.2" lengthAdjust="spacingAndGlyphs" >Suchen</text>
<text x="585.5" y="599" font-size="11" fill="#000" textLength="62.3" lengthAdjust="spacingAndGlyphs" >Suchfunktion</text>
<text x="585.5" y="612" font-size="11" fill="#000" textLength="44.2" lengthAdjust="spacingAndGlyphs" >Summe N</text>
<text x="585.5" y="625" font-size="11" fill="#000" textLength="48.8" lengthAdjust="spacingAndGlyphs" >Summe PE</text>
<text x="585.5" y="638" font-size="11" fill="#000" textLength="38" lengthAdjust="spacingAndGlyphs" >Summer</text>
<text x="585.5" y="651" font-size="11" fill="#000" textLength="88" lengthAdjust="spacingAndGlyphs" >Summer, Schnarre</text>
<text x="585.5" y="664" font-size="11" fill="#000" textLength="34" lengthAdjust="spacingAndGlyphs" >Symbol</text>
<text x="585.5" y="677" font-size="11" fill="#000" textLength="79.8" lengthAdjust="spacingAndGlyphs" >Symbolanschluss</text>
<text x="585.5" y="690" font-size="11" fill="#000" textLength="79.8" lengthAdjust="spacingAndGlyphs" >Symbolbibliothek</text>
<text x="585.5" y="703" font-size="11" fill="#000" textLength="58.4" lengthAdjust="spacingAndGlyphs" >Symboldatei</text>
<text x="585.5" y="716" font-size="11" fill="#000" textLength="61.8" lengthAdjust="spacingAndGlyphs" >Symboleditor</text>
<text x="585.5" y="729" font-size="11" fill="#000" textLength="100.2" lengthAdjust="spacingAndGlyphs" >Symbolische Adresse</text>
<text x="585.5" y="742" font-size="11" fill="#000" textLength="99.2" lengthAdjust="spacingAndGlyphs" >symbolische Adresse</text>
<text x="585.5" y="755" font-size="11" fill="#000" textLength="59.1" lengthAdjust="spacingAndGlyphs" >Symbolleiste</text>
<text x="585.5" y="768" font-size="11" fill="#000" textLength="92.8" lengthAdjust="spacingAndGlyphs" >Symbolleisteneditor</text>
<text x="585.5" y="781" font-size="11" fill="#000" textLength="62.8" lengthAdjust="spacingAndGlyphs" >Symbolmakro</text>
<text x="585.5" y="794" font-size="11" fill="#000" textLength="60.1" lengthAdjust="spacingAndGlyphs" >Symbolname</text>
<text x="585.5" y="807" font-size="11" fill="#000" textLength="72" lengthAdjust="spacingAndGlyphs" >Symbolnummer</text>
<rect x="922.5" y="498.5" width="14" height="14" rx="2" fill="url(#scb)" stroke="#c2d2f6" stroke-width="1"/>
<path d="M926 508 L929.5 504.5 L933 508" fill="none" stroke="#4d6185" stroke-width="2"/>
<rect x="922.5" y="793.5" width="14" height="15" rx="2" fill="url(#scb)" stroke="#c2d2f6" stroke-width="1"/>
<path d="M926 799 L929.5 802.5 L933 799" fill="none" stroke="#4d6185" stroke-width="2"/>
<rect x="922.5" y="741.5" width="14" height="6" rx="1.5" fill="#c6d4f7" stroke="#b0c2ee" stroke-width="1"/>
<text x="955" y="467.6" font-size="11" fill="#000" textLength="48.5" lengthAdjust="spacingAndGlyphs" >Stichwort:</text>
<rect x="955" y="468.5" width="6" height="1" fill="#000"/>
<g shape-rendering="crispEdges">
<rect x="1326" y="451" width="91" height="1" fill="#d6d2c6" />
<rect x="1326" y="469" width="91" height="1" fill="#f6f5f0" />
<rect x="1326" y="451" width="1" height="19" fill="#c4c0b4" />
<rect x="1349" y="451" width="1" height="19" fill="#c4c0b4" />
<rect x="1372" y="451" width="1" height="19" fill="#c4c0b4" />
<rect x="1395" y="451" width="1" height="19" fill="#c4c0b4" />
</g>
<rect x="1328.7" y="453.7" width="17.6" height="14.6" rx="3" fill="#f2f6fb" stroke="#20405c" stroke-width="1.4"/>
<rect x="1351.7" y="453.7" width="17.6" height="14.6" rx="3" fill="#f2f6fb" stroke="#20405c" stroke-width="1.4"/>
<rect x="1374.7" y="453.7" width="17.6" height="14.6" rx="3" fill="#f2f6fb" stroke="#20405c" stroke-width="1.4"/>
<rect x="1397.7" y="453.7" width="17.6" height="14.6" rx="3" fill="#f2f6fb" stroke="#20405c" stroke-width="1.4"/>
<rect x="1333" y="458" width="11" height="8" fill="#d4dae6"/>
<path d="M1336 459 L1344 459 L1344 466 L1333 466 L1333 462" fill="#eef1f6"/>
<rect x="1333" y="466" width="1" height="1" fill="#000"/>
<rect x="1335" y="466" width="1" height="1" fill="#000"/>
<rect x="1337" y="466" width="1" height="1" fill="#000"/>
<rect x="1339" y="466" width="1" height="1" fill="#000"/>
<rect x="1341" y="466" width="1" height="1" fill="#000"/>
<rect x="1343" y="466" width="1" height="1" fill="#000"/>
<rect x="1344" y="458" width="1" height="1" fill="#000"/>
<rect x="1333" y="460" width="1" height="1" fill="#000"/>
<rect x="1344" y="460" width="1" height="1" fill="#000"/>
<rect x="1333" y="462" width="1" height="1" fill="#000"/>
<rect x="1344" y="462" width="1" height="1" fill="#000"/>
<rect x="1333" y="464" width="1" height="1" fill="#000"/>
<rect x="1344" y="464" width="1" height="1" fill="#000"/>
<rect x="1333" y="466" width="1" height="1" fill="#000"/>
<rect x="1337" y="458" width="1" height="1" fill="#000"/>
<rect x="1339" y="458" width="1" height="1" fill="#000"/>
<rect x="1341" y="458" width="1" height="1" fill="#000"/>
<rect x="1343" y="458" width="1" height="1" fill="#000"/>
<path d="M1334.5 453.5 L1334.5 461.5 M1330.5 457.5 L1338.5 457.5 M1331.7 454.7 L1337.3 460.3 M1337.3 454.7 L1331.7 460.3" stroke="#f07818" stroke-width="1.2"/>
<circle cx="1334.5" cy="457.5" r="1.8" fill="#f8a020"/>
<rect x="1354" y="456" width="12" height="10" fill="#a8a49a"/><rect x="1356" y="457" width="8" height="4" fill="#f0eee8"/><rect x="1358" y="463" width="4" height="3" fill="#e8e6e0"/>
<rect x="1378.5" y="455.5" width="6" height="8" fill="#dcecfa" stroke="#2a64a8" stroke-width="1"/><rect x="1381.5" y="458.5" width="6" height="8" fill="#dcecfa" stroke="#2a64a8" stroke-width="1"/>
<path d="M1383 461.5 H1386 M1383 463.5 H1386 M1380 458.5 H1381" stroke="#5a90c8" stroke-width="1"/>
<path d="M1400.5 455.5 L1412.5 467 M1412.5 455.5 L1400.5 467" stroke="#b80c2c" stroke-width="2.3"/>
<g shape-rendering="crispEdges">
<rect x="956" y="475" width="460" height="337" fill="#ffffff" />
<rect x="956" y="475" width="460" height="2" fill="#7a7868" />
<rect x="956" y="475" width="2" height="337" fill="#7a7868" />
<rect x="1415" y="477" width="1" height="335" fill="#d8d4cc" />
<rect x="958" y="811" width="458" height="1" fill="#ece9e0" />
<rect x="958" y="477" width="68" height="269" fill="#ece9d8" />
<rect x="958" y="490" width="458" height="1" fill="#aca899" />
<rect x="958" y="505" width="458" height="1" fill="#aca899" />
<rect x="958" y="520" width="458" height="1" fill="#aca899" />
<rect x="958" y="535" width="458" height="1" fill="#aca899" />
<rect x="958" y="550" width="458" height="1" fill="#aca899" />
<rect x="958" y="565" width="458" height="1" fill="#aca899" />
<rect x="958" y="580" width="458" height="1" fill="#aca899" />
<rect x="958" y="595" width="458" height="1" fill="#aca899" />
<rect x="958" y="610" width="458" height="1" fill="#aca899" />
<rect x="958" y="625" width="458" height="1" fill="#aca899" />
<rect x="958" y="640" width="458" height="1" fill="#aca899" />
<rect x="958" y="655" width="458" height="1" fill="#aca899" />
<rect x="958" y="670" width="458" height="1" fill="#aca899" />
<rect x="958" y="685" width="458" height="1" fill="#aca899" />
<rect x="958" y="700" width="458" height="1" fill="#aca899" />
<rect x="958" y="715" width="458" height="1" fill="#aca899" />
<rect x="958" y="730" width="458" height="1" fill="#aca899" />
<rect x="958" y="745" width="458" height="1" fill="#aca899" />
<rect x="1026" y="477" width="1" height="269" fill="#aca899" />
</g>
<text x="959" y="486.8" font-size="11" fill="#000" textLength="30.35" lengthAdjust="spacingAndGlyphs" >cs_CZ</text>
<text x="1028.5" y="486.8" font-size="11" fill="#000" textLength="18.1" lengthAdjust="spacingAndGlyphs" >Kus</text>
<text x="959" y="501.8" font-size="11" fill="#000" textLength="32.12" lengthAdjust="spacingAndGlyphs" >da_DK</text>
<text x="1028.5" y="501.8" font-size="11" fill="#000" textLength="20.43" lengthAdjust="spacingAndGlyphs" >Styk</text>
<text x="959" y="516.8" font-size="11" fill="#000" textLength="32.12" lengthAdjust="spacingAndGlyphs" >de_DE</text>
<text x="1028.5" y="516.8" font-size="11" fill="#000" textLength="26.27" lengthAdjust="spacingAndGlyphs" >Stück</text>
<text x="959" y="531.8" font-size="11" fill="#000" textLength="32.12" lengthAdjust="spacingAndGlyphs" >en_US</text>
<text x="1028.5" y="531.8" font-size="11" fill="#000" textLength="37.36" lengthAdjust="spacingAndGlyphs" >Number</text>
<text x="959" y="546.8" font-size="11" fill="#000" textLength="30.95" lengthAdjust="spacingAndGlyphs" >es_ES</text>
<text x="1028.5" y="546.8" font-size="11" fill="#000" textLength="26.28" lengthAdjust="spacingAndGlyphs" >Pieza</text>
<text x="959" y="561.8" font-size="11" fill="#000" textLength="20.43" lengthAdjust="spacingAndGlyphs" >fi_FI</text>
<text x="959" y="576.8" font-size="11" fill="#000" textLength="26.26" lengthAdjust="spacingAndGlyphs" >fr_FR</text>
<text x="1028.5" y="576.8" font-size="11" fill="#000" textLength="26.28" lengthAdjust="spacingAndGlyphs" >Pièce</text>
<text x="959" y="591.8" font-size="11" fill="#000" textLength="32.7" lengthAdjust="spacingAndGlyphs" >hu_HU</text>
<text x="1028.5" y="591.8" font-size="11" fill="#000" textLength="28.61" lengthAdjust="spacingAndGlyphs" >Darab</text>
<text x="959" y="606.8" font-size="11" fill="#000" textLength="20.43" lengthAdjust="spacingAndGlyphs" >it_IT</text>
<text x="1028.5" y="606.8" font-size="11" fill="#000" textLength="29.2" lengthAdjust="spacingAndGlyphs" >Pezzo</text>
<text x="959" y="621.8" font-size="11" fill="#000" textLength="31.53" lengthAdjust="spacingAndGlyphs" >ko_KR</text>
<rect x="1030.5" y="613.3" width="7" height="8" fill="none" stroke="#000" stroke-width="1"/>
<rect x="1041.5" y="613.3" width="7" height="8" fill="none" stroke="#000" stroke-width="1"/>
<text x="959" y="636.8" font-size="11" fill="#000" textLength="27.45" lengthAdjust="spacingAndGlyphs" >nl_NL</text>
<text x="1028.5" y="636.8" font-size="11" fill="#000" textLength="21.02" lengthAdjust="spacingAndGlyphs" >Stuk</text>
<text x="959" y="651.8" font-size="11" fill="#000" textLength="26.87" lengthAdjust="spacingAndGlyphs" >pl_PL</text>
<text x="1028.5" y="651.8" font-size="11" fill="#000" textLength="32.11" lengthAdjust="spacingAndGlyphs" >Sztuka</text>
<text x="959" y="666.8" font-size="11" fill="#000" textLength="29.2" lengthAdjust="spacingAndGlyphs" >pt_BR</text>
<text x="1028.5" y="666.8" font-size="11" fill="#000" textLength="23.94" lengthAdjust="spacingAndGlyphs" >Peça</text>
<text x="959" y="681.8" font-size="11" fill="#000" textLength="28.03" lengthAdjust="spacingAndGlyphs" >pt_PT</text>
<text x="1028.5" y="681.8" font-size="11" fill="#000" textLength="23.94" lengthAdjust="spacingAndGlyphs" >Peça</text>
<text x="959" y="696.8" font-size="11" fill="#000" textLength="30.35" lengthAdjust="spacingAndGlyphs" >ru_RU</text>
<text x="1028.5" y="696.8" font-size="11" fill="#000" textLength="54.47" lengthAdjust="spacingAndGlyphs" >на изделие</text>
<text x="959" y="711.8" font-size="11" fill="#000" textLength="30.36" lengthAdjust="spacingAndGlyphs" >sv_SE</text>
<text x="1028.5" y="711.8" font-size="11" fill="#000" textLength="25.68" lengthAdjust="spacingAndGlyphs" >Styck</text>
<text x="959" y="726.8" font-size="11" fill="#000" textLength="32.11" lengthAdjust="spacingAndGlyphs" >zh_CN</text>
<rect x="1030.5" y="718.3" width="7" height="8" fill="none" stroke="#000" stroke-width="1"/>
<text x="959" y="741.8" font-size="11" fill="#000" textLength="54.29" lengthAdjust="spacingAndGlyphs" >Kommentar</text>
<rect x="1028.0" y="521.0" width="386" height="13" fill="#fff" stroke="#000" stroke-width="2" rx="0" />
<text x="1028.5" y="531.8" font-size="11" fill="#000" textLength="37.36" lengthAdjust="spacingAndGlyphs" >Number</text>
<rect x="1337.5" y="848.5" width="102" height="20" rx="3" fill="url(#btn)" stroke="#003c74" stroke-width="1"/>
<rect x="1339" y="850" width="99" height="1.5" fill="#ffffff" opacity="0.8"/>
<rect x="1339" y="865" width="99" height="2" fill="#a8c0ea" opacity="0.7"/>
<text x="1388.5" y="862.5" font-size="11" fill="#000" text-anchor="middle" textLength="45.5" lengthAdjust="spacingAndGlyphs" >Schließen</text>
<rect x="1451" y="872" width="2" height="2" fill="#b8b4a8"/>
<rect x="1448" y="875" width="2" height="2" fill="#b8b4a8"/>
<rect x="1451" y="875" width="2" height="2" fill="#b8b4a8"/>
<rect x="1445" y="878" width="2" height="2" fill="#b8b4a8"/>
<rect x="1448" y="878" width="2" height="2" fill="#b8b4a8"/>
<rect x="1451" y="878" width="2" height="2" fill="#b8b4a8"/>
</svg></body></html>
